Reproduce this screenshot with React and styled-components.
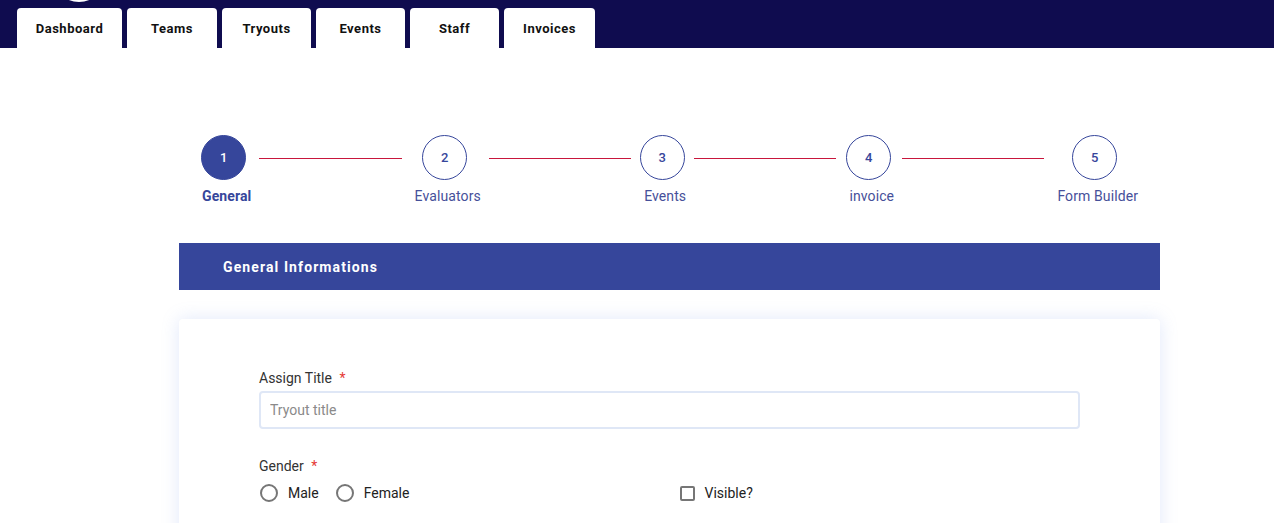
import React from 'react';
import styled, { createGlobalStyle } from 'styled-components';

const GlobalStyle = createGlobalStyle`
	body {
		margin: 0;
		background: #ffffff;
		font-family: Roboto, "Liberation Sans", sans-serif;
	}
`;

const tabs = ['Dashboard', 'Teams', 'Tryouts', 'Events', 'Staff', 'Invoices'];
const tabWidths = [105, 90, 89, 89, 89, 91];

const steps = ['General', 'Evaluators', 'Events', 'invoice', 'Form Builder'];

export default function App() {
	return (
		<>
			<GlobalStyle />
			<NavBar>
				<Logo />
				{tabs.map((t, i) => (
					<Tab key={t} $width={tabWidths[i]}>
						{t}
					</Tab>
				))}
			</NavBar>
			<Main>
				<Stepper>
					{steps.map((s, i) => (
						<React.Fragment key={s}>
							{i > 0 && <Connector />}
							<Step>
								<StepCircle $active={i === 0}>{i + 1}</StepCircle>
								<StepLabel $active={i === 0}>{s}</StepLabel>
							</Step>
						</React.Fragment>
					))}
				</Stepper>
				<SectionHeader>General Informations</SectionHeader>
				<Card>
					<Field>
						<Label>
							Assign Title <Required>*</Required>
						</Label>
						<TextInput placeholder="Tryout title" />
					</Field>
					<Row>
						<Field>
							<Label>
								Gender <Required>*</Required>
							</Label>
							<Options>
								<Option>
									<Radio />
									Male
								</Option>
								<Option>
									<Radio />
									Female
								</Option>
							</Options>
						</Field>
						<CheckField>
							<Option>
								<Checkbox />
								Visible?
							</Option>
						</CheckField>
					</Row>
				</Card>
			</Main>
		</>
	);
}

const NavBar = styled.nav`
	position: relative;
	display: flex;
	align-items: flex-end;
	gap: 5px;
	height: 48px;
	padding-left: 17px;
	background: #0f0c4f;
	box-sizing: border-box;
	overflow: hidden;
`;

const Logo = styled.div`
	position: absolute;
	left: 52px;
	top: -52px;
	width: 54px;
	height: 54px;
	border-radius: 50%;
	background: #ffffff;
`;

const Tab = styled.div`
	display: flex;
	align-items: center;
	justify-content: center;
	width: ${(p) => p.$width}px;
	height: 40px;
	background: #ffffff;
	border-radius: 4px 4px 0 0;
	font-size: 13px;
	font-weight: 700;
	letter-spacing: 0.5px;
	color: #111111;
`;

const Main = styled.main`
	width: 981px;
	margin: 0 0 0 179px;
	padding-top: 87px;
`;

const Stepper = styled.div`
	display: flex;
	align-items: flex-start;
	padding: 0 22px 0 17px;
	margin-bottom: 38px;
`;

const Step = styled.div`
	display: flex;
	flex-direction: column;
	align-items: center;
`;

const StepCircle = styled.div`
	display: flex;
	align-items: center;
	justify-content: center;
	width: 45px;
	height: 45px;
	box-sizing: border-box;
	border-radius: 50%;
	border: 1px solid #36469b;
	background: ${(p) => (p.$active ? '#36469b' : '#ffffff')};
	color: ${(p) => (p.$active ? '#ffffff' : '#36469b')};
	font-size: 13px;
	font-weight: 500;
`;

const StepLabel = styled.div`
	margin-top: 8px;
	padding-left: 6px;
	font-size: 14px;
	line-height: 17px;
	letter-spacing: 0.1px;
	font-weight: ${(p) => (p.$active ? 700 : 400)};
	color: ${(p) => (p.$active ? '#36469b' : '#46509a')};
	white-space: nowrap;
`;

const Connector = styled.div`
	flex: 1;
	height: 1px;
	margin: 23px 7px 0 8px;
	background: #c8163c;
`;

const SectionHeader = styled.div`
	display: flex;
	align-items: center;
	height: 47px;
	padding-left: 44px;
	background: #36469b;
	color: #ffffff;
	font-size: 14px;
	font-weight: 700;
	letter-spacing: 1.1px;
`;

const Card = styled.section`
	margin-top: 29px;
	padding: 51px 80px 30px;
	background: #ffffff;
	border-radius: 4px;
	box-shadow: 0 0 18px rgba(120, 150, 230, 0.22);
	min-height: 200px;
`;

const Field = styled.div`
	display: flex;
	flex-direction: column;
`;

const Label = styled.label`
	font-size: 14px;
	line-height: 17px;
	color: #333333;
	margin-bottom: 4px;
`;

const Required = styled.span`
	margin-left: 4px;
	color: #e53935;
`;

const TextInput = styled.input`
	height: 38px;
	box-sizing: border-box;
	padding: 0 9px;
	border: 2px solid #dfe7f6;
	border-radius: 4px;
	font-family: Roboto, "Liberation Sans", sans-serif;
	font-size: 14px;
	outline: none;

	&::placeholder {
		color: #8a8a8a;
	}
`;

const Row = styled.div`
	display: grid;
	grid-template-columns: 1fr 1fr;
	column-gap: 20px;
	margin-top: 29px;
`;

const CheckField = styled.div`
	display: flex;
	align-items: flex-end;
`;

const Options = styled.div`
	display: flex;
	gap: 17px;
	margin-top: 4px;
	padding-left: 1px;
`;

const Option = styled.div`
	display: flex;
	align-items: center;
	gap: 10px;
	height: 20px;
	font-size: 14px;
	color: #222222;
`;

const Radio = styled.span`
	width: 18px;
	height: 18px;
	box-sizing: border-box;
	border: 2px solid #767676;
	border-radius: 50%;
`;

const Checkbox = styled.span`
	width: 15px;
	height: 15px;
	box-sizing: border-box;
	border: 2px solid #767676;
	border-radius: 2px;
`;
